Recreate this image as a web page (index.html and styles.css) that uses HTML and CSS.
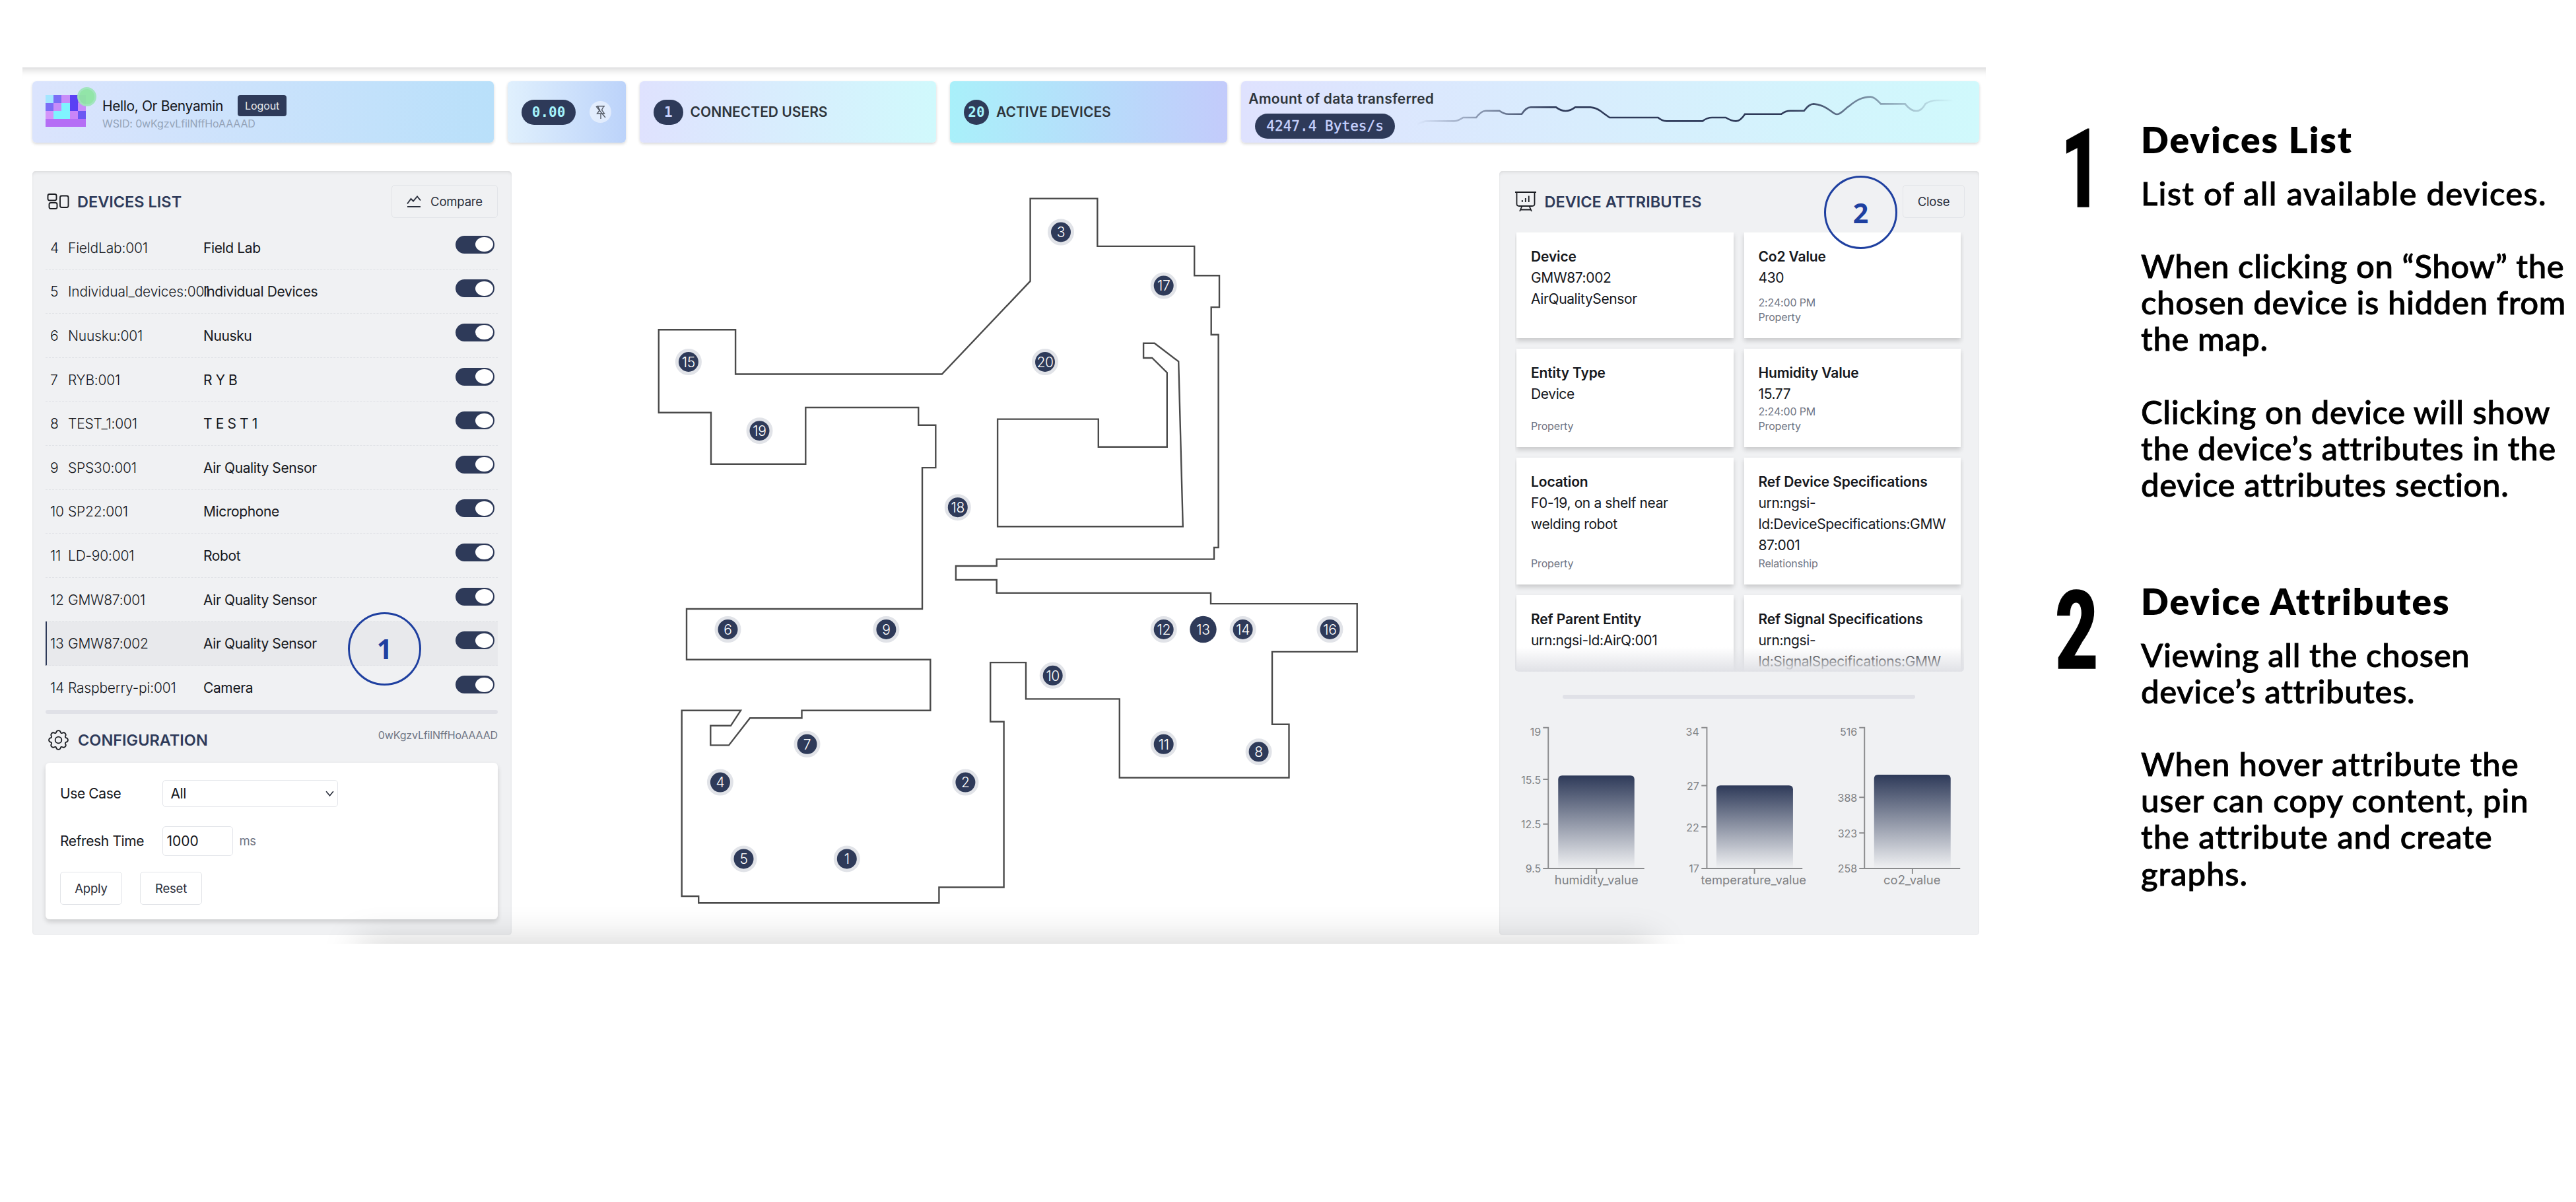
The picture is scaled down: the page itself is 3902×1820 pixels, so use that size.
FILE: index.html
```html
<!DOCTYPE html>
<html lang="en">
<head>
<meta charset="utf-8">
<title>Dashboard guide</title>
<link rel="stylesheet" href="styles.css">
</head>
<body>
<div class="page">
<div class="app">
  <header class="topbar">
    <section class="tile tile-user">
      <div class="avatar">
        <svg viewBox="0 0 5 4" preserveAspectRatio="none" shape-rendering="crispEdges">
          <rect width="5" height="4" fill="#b56ef5"/>
          <path fill="#a4e6ff" d="M0 0h1v1H0z"/>
          <path fill="#7b6df6" d="M1 0h1v1H1zM0 1h1v1H0z"/>
          <path fill="#c88df9" d="M2 0h1v1H2zM1 1h1v1H1zM4 1h1v1H4z"/>
          <path fill="#5a40f4" d="M3 0h1v2H3z"/>
          <path fill="#7ff4ff" d="M2 1h1v1H2zM1 2h2v1H1z"/>
          <path fill="#d494fa" d="M0 2h1v1H0z"/><path fill="#c985f8" d="M3 2h1v1H3z"/>
          <path fill="#6b57f3" d="M4 2h1v1H4z"/>
        </svg>
        <i class="online"></i>
      </div>
      <div class="user">
        <div class="hello"><span>Hello, Or Benyamin</span><button class="logout">Logout</button></div>
        <div class="wsid">WSID: 0wKgzvLfilNffHoAAAAD</div>
      </div>
    </section>
    <section class="tile tile-pin">
      <span class="pill cyan">0.00</span>
      <span class="pin"><svg viewBox="0 0 16 20"><path d="M2 .8h12M3.500 1l3 5.500-4 5.500h11l-4-5.500 3-5.500M8 12v8M1 1l14 17"/></svg></span>
    </section>
    <section class="tile tile-users"><span class="pill lilac">1</span><b>CONNECTED USERS</b></section>
    <section class="tile tile-active"><span class="pill round cyan">20</span><b>ACTIVE DEVICES</b></section>
    <section class="tile tile-data">
      <div><b class="amount">Amount of data transferred</b><span class="pill lilac">4247.4 Bytes/s</span></div>
      <svg class="spark" viewBox="397 190 1065 140" preserveAspectRatio="none">
        <defs><linearGradient id="fade" gradientUnits="userSpaceOnUse" x1="397" y1="0" x2="1462" y2="0"><stop offset="0" stop-color="#2e3a59" stop-opacity="0"/><stop offset=".25" stop-color="#2e3a59"/><stop offset=".7" stop-color="#2e3a59"/><stop offset="1" stop-color="#2e3a59" stop-opacity="0"/></linearGradient></defs>
        <path d="M397 325Q410 308 420 308H472Q480 308 490 292H516Q526 261 535 261H562Q571 276 580 276H606Q615 245 624 245H674Q684 262 693 262T712 245H742Q754 248 762 262T780 292H876Q884 308 893 308H964Q973 292 983 292H1010Q1021 308 1030 308T1048 276H1120Q1128 261 1138 261H1165Q1175 230 1184 230C1200 232 1210 248 1218 262Q1226 277 1230 277C1238 277 1244 255 1254 240C1268 214 1280 198 1297 198Q1304 198 1317 230H1365Q1376 262 1387 262T1405 230Q1415 214 1428 214H1462"/>
      </svg>
    </section>
  </header>

  <main class="main">
    <aside class="panel devices">
      <div class="head">
        <h2><svg class="ic" viewBox="0 0 34 26"><rect x="1.500" y="2" width="13" height="9.500" rx="2.500"/><rect x="3.500" y="15" width="12" height="9" rx="2.500"/><rect x="20" y="4.500" width="12.500" height="17.500" rx="2.500"/></svg>DEVICES LIST</h2>
        <button class="btn compare"><svg viewBox="0 0 22 18"><path d="M1 12.500L6.500 5l3.500 3.500 6-7 5 6M1 17h20"/></svg>Compare</button>
      </div>
      <ul class="rows">
        <li><span>4</span><span>FieldLab:001</span><em>Field Lab</em><i class="toggle"></i></li>
        <li><span>5</span><span>Individual_devices:001</span><em>Individual Devices</em><i class="toggle"></i></li>
        <li><span>6</span><span>Nuusku:001</span><em>Nuusku</em><i class="toggle"></i></li>
        <li><span>7</span><span>RYB:001</span><em>R Y B</em><i class="toggle"></i></li>
        <li><span>8</span><span>TEST_1:001</span><em>T E S T 1</em><i class="toggle"></i></li>
        <li><span>9</span><span>SPS30:001</span><em>Air Quality Sensor</em><i class="toggle"></i></li>
        <li><span>10</span><span>SP22:001</span><em>Microphone</em><i class="toggle"></i></li>
        <li><span>11</span><span>LD-90:001</span><em>Robot</em><i class="toggle"></i></li>
        <li><span>12</span><span>GMW87:001</span><em>Air Quality Sensor</em><i class="toggle"></i></li>
        <li class="on"><span>13</span><span>GMW87:002</span><em>Air Quality Sensor</em><i class="toggle"></i></li>
        <li><span>14</span><span>Raspberry-pi:001</span><em>Camera</em><i class="toggle"></i></li>
      </ul>
      <div class="rule"></div>
      <div class="conf-head">
        <h2><svg class="ic gear" viewBox="-.6 -.6 17.200 17.200"><circle cx="8" cy="8" r="2.700"/><path d="M9.796 1.343c-.527-1.790-3.065-1.790-3.592 0l-.094.319a.873.873 0 0 1-1.255.52l-.292-.16c-1.640-.892-3.433.902-2.540 2.541l.159.292a.873.873 0 0 1-.52 1.255l-.319.094c-1.790.527-1.790 3.065 0 3.592l.319.094a.873.873 0 0 1 .52 1.255l-.16.292c-.892 1.640.901 3.434 2.541 2.540l.292-.159a.873.873 0 0 1 1.255.52l.094.319c.527 1.790 3.065 1.790 3.592 0l.094-.319a.873.873 0 0 1 1.255-.52l.292.16c1.640.893 3.434-.902 2.540-2.541l-.159-.292a.873.873 0 0 1 .52-1.255l.319-.094c1.790-.527 1.790-3.065 0-3.592l-.319-.094a.873.873 0 0 1-.52-1.255l.16-.292c.893-1.640-.902-3.433-2.541-2.540l-.292.159a.873.873 0 0 1-1.255-.52z"/></svg>CONFIGURATION</h2>
        <small>0wKgzvLfilNffHoAAAAD</small>
      </div>
      <div class="config">
        <div class="field"><label>Use Case</label><div class="select">All<svg viewBox="0 0 12 8"><path d="M1 1l5 6 5-6"/></svg></div></div>
        <div class="field refresh"><label>Refresh Time</label><div class="input">1000</div><span class="ms">ms</span></div>
        <div class="actions"><button class="btn">Apply</button><button class="btn">Reset</button></div>
      </div>
    </aside>

    <svg class="map" viewBox="775 259 1496 1157">
      <g class="walls">
        <path d="M1560.600 300.600H1662.300V372.900H1809.200V417.300H1847V465.100H1834.700V506.800H1845.600V829H1839V846.600H1509.700V857H1447.900V878H1509.700V897.900H1834V914.100H2055.700V986.900H1927V1096.800H1952.500V1177.500H1695.800V1058.400H1554V1003.100H1500.200V1092.800H1520.600V1343.500H1422.400V1367.300H1058.200V1357H1032.700V1075.800H1122L1106.900 1098.800H1076.300V1128.400H1104L1136 1087.300H1214.500V1075.800H1409.300V998.700H1040V922H1397V708.100H1417.300V643.800H1391.200V617H1220.300V702.700H1077V624.700H997.800V499.200H1114.100V566.500H1426.800L1560.600 425.700Z"/>
        <path d="M1732.100 519.800H1748.900L1785.200 547.400L1791.800 797.300H1511.100V634.600H1663.800V676.700H1767.800V564.200L1745.200 542H1732.100Z"/>
      </g>
      <g class="marks">
        <g transform="translate(1607 351.500)"><circle r="17.500"/><text>3</text></g>
        <g transform="translate(1762.700 432.600)"><circle r="17.500"/><text>17</text></g>
        <g transform="translate(1042.900 548)"><circle r="17.500"/><text>15</text></g>
        <g transform="translate(1583 548)"><circle r="17.500"/><text>20</text></g>
        <g transform="translate(1150.500 652.200)"><circle r="17.500"/><text>19</text></g>
        <g transform="translate(1450.800 768.200)"><circle r="17.500"/><text>18</text></g>
        <g transform="translate(1102.500 953)"><circle r="17.500"/><text>6</text></g>
        <g transform="translate(1342.400 953)"><circle r="17.500"/><text>9</text></g>
        <g transform="translate(1762.700 953)"><circle r="17.500"/><text>12</text></g>
        <g transform="translate(1822.500 953)" class="sel"><circle r="20.200"/><text>13</text></g>
        <g transform="translate(1882.600 953)"><circle r="17.500"/><text>14</text></g>
        <g transform="translate(2014.500 953)"><circle r="17.500"/><text>16</text></g>
        <g transform="translate(1594.700 1022.800)"><circle r="17.500"/><text>10</text></g>
        <g transform="translate(1222.500 1126.800)"><circle r="17.500"/><text>7</text></g>
        <g transform="translate(1762.700 1126.800)"><circle r="17.500"/><text>11</text></g>
        <g transform="translate(1906.600 1138.300)"><circle r="17.500"/><text>8</text></g>
        <g transform="translate(1090.900 1184.600)"><circle r="17.500"/><text>4</text></g>
        <g transform="translate(1462.400 1184.600)"><circle r="17.500"/><text>2</text></g>
        <g transform="translate(1126.500 1300.400)"><circle r="17.500"/><text>5</text></g>
        <g transform="translate(1282.800 1300.400)"><circle r="17.500"/><text>1</text></g>
      </g>
    </svg>

    <aside class="panel attrs">
      <div class="head">
        <h2><svg class="ic board" viewBox="0 0 32 32"><path d="M0 2h32M2.500 2v17.500q0 3.500 3.500 3.500h20q3.500 0 3.500-3.500V2M10.500 23l-3.500 8M21.500 23l3.500 8M8.500 28.500h15M10.800 17v-3M15.800 17v-6M20.800 17V7.500"/></svg>DEVICE ATTRIBUTES</h2>
        <button class="btn">Close</button>
      </div>
      <div class="cards">
        <article><h3>Device</h3><p>GMW87:002<br>AirQualitySensor</p></article>
        <article><h3>Co2 Value</h3><p>430</p><small>2:24:00 PM<br>Property</small></article>
        <article><h3>Entity Type</h3><p>Device</p><small>Property</small></article>
        <article><h3>Humidity Value</h3><p>15.77</p><small>2:24:00 PM<br>Property</small></article>
        <article><h3>Location</h3><p>F0-19, on a shelf near welding robot</p><small>Property</small></article>
        <article><h3>Ref Device Specifications</h3><p>urn:ngsi-<br>ld:DeviceSpecifications:GMW<br>87:001</p><small>Relationship</small></article>
        <article><h3>Ref Parent Entity</h3><p>urn:ngsi-ld:AirQ:001</p></article>
        <article><h3>Ref Signal Specifications</h3><p>urn:ngsi-<br>ld:SignalSpecifications:GMW</p></article>
      </div>
      <div class="rule short"></div>
      <svg class="charts" viewBox="2271 1090 727 260">
        <defs><linearGradient id="bar" x1="0" y1="0" x2="0" y2="1"><stop offset="0" stop-color="#2e3a59"/><stop offset="1" stop-color="#2e3a59" stop-opacity="0"/></linearGradient></defs>
        <g fill="url(#bar)">
          <path d="M2360 1315V1180.300q0-6 6-6H2469.500q6 0 6 6V1315z"/>
          <path d="M2599.700 1315V1195.300q0-6 6-6H2709.700q6 0 6 6V1315z"/>
          <path d="M2838.500 1315V1179q0-6 6-6H2948.500q6 0 6 6V1315z"/>
        </g>
        <path class="axis" d="M2337 1101.700H2345V1315M2337 1180H2345M2337 1247.700H2345M2337 1315H2490.500M2418 1315v8M2577 1101.700H2585.200V1315M2577 1189.500H2585M2577 1252H2585M2577 1315H2730M2657.400 1315v8M2816 1101.700H2824V1315M2816 1207.300H2824M2816 1261.300H2824M2816 1315H2969M2896.600 1315v8"/>
        <g class="ylab">
          <text x="2334" y="1113.500">19</text><text x="2334" y="1186.500">15.5</text><text x="2334" y="1253.500">12.5</text><text x="2334" y="1321">9.5</text>
          <text x="2573.500" y="1113.500">34</text><text x="2573.500" y="1195.500">27</text><text x="2573.500" y="1258.500">22</text><text x="2573.500" y="1321">17</text>
          <text x="2813" y="1113.500">516</text><text x="2813" y="1213.500">388</text><text x="2813" y="1267.500">323</text><text x="2813" y="1321">258</text>
        </g>
        <g class="xlab"><text x="2418" y="1339">humidity_value</text><text x="2656" y="1339">temperature_value</text><text x="2896" y="1339">co2_value</text></g>
      </svg>
    </aside>
  </main>
  <div class="glow"></div>
  <span class="callout c1">1</span>
  <span class="callout c2">2</span>
</div>

<div class="notes">
  <section class="note n1">
    <div class="num"><span>1</span></div>
    <div class="body">
      <h1>Devices List</h1>
      <p class="loose">List of all available devices.</p>
      <p>When clicking on “Show” the<br>chosen device is hidden from<br>the map.</p>
      <p>Clicking on device will show<br>the device’s attributes in the<br>device attributes section.</p>
    </div>
  </section>
  <section class="note n2">
    <div class="num"><span>2</span></div>
    <div class="body">
      <h1>Device Attributes</h1>
      <p>Viewing all the chosen<br>device’s attributes.</p>
      <p class="mid">When hover attribute the<br>user can copy content, pin<br>the attribute and create<br>graphs.</p>
    </div>
  </section>
</div>
</div>
</body>
</html>
```
FILE: styles.css
```css
*{box-sizing:border-box;margin:0;padding:0}
body{background:#fff;font-family:Inter,"Liberation Sans",sans-serif;font-size:21px;letter-spacing:-.38px;color:#16181d;overflow:hidden}
button{font:inherit;letter-spacing:inherit;color:inherit;background:none;border:0}
ul{list-style:none}
svg{display:block;fill:none}
i,em{font-style:normal}
.page{display:flex;width:3902px;height:1820px;padding:102px 0 0 34px}

.app{position:relative;flex:none;width:2974px;height:1326.500px;padding:19px 10px 0 15px;overflow:hidden;box-shadow:inset 0 12px 10px -8px rgba(0,0,0,.12);border-top:2px solid #e3e3e4}
.topbar{display:grid;grid-template-columns:698.500px 179px 449px 420px 1fr;grid-template-rows:93px;gap:21.200px;height:93px}
.tile{display:flex;align-items:center;border-radius:6px;box-shadow:0 2px 4px rgba(0,0,0,.16);white-space:nowrap}
.tile b{font-weight:600;letter-spacing:0;color:#2f353b}
.tile-user{align-items:flex-start;padding:21px 0 0 20px;gap:25px;background:linear-gradient(90deg,#dbe4fd,#b9e0fa)}
.avatar{position:relative;width:61px;height:48px}
.avatar svg{width:100%;height:100%}
.online{position:absolute;left:48px;top:-12px;width:29px;height:29px;border-radius:50%;background:#8fe6a4;border:3px solid #9fe6bb;opacity:.95}
.hello{display:flex;align-items:center;height:32px}
.logout{width:74px;height:32px;margin-left:22px;border-radius:4px;background:#2e3a59;color:#e8eaef;font-size:16px;letter-spacing:-.1px}
.wsid{font-size:16px;line-height:22px;letter-spacing:-.14px;color:#94a3b8}
.tile-pin{padding-left:21px;gap:21px;background:linear-gradient(90deg,#e0f0fd,#bcd3fa)}
.pin{display:grid;place-items:center;width:33px;height:33px;border-radius:50%;background:rgba(255,255,255,.5)}
.pin svg{width:16px;height:20px;stroke:#555b66;stroke-width:1.400}
.pill{display:inline-flex;align-items:center;height:38px;padding:0 16px;border-radius:19px;background:#2e3a59;font:700 21px "DejaVu Sans Mono",monospace;letter-spacing:.05px;white-space:pre}
.cyan{color:#a5f3fc}
.lilac{color:#c7d2fe}
.round{width:38px;padding:0;justify-content:center}
.tile-users{padding-left:21px;gap:11px;background:linear-gradient(90deg,#dfe2fe,#d0f9fc)}
.tile-active{padding-left:21px;gap:11px;background:linear-gradient(90deg,#a9f0fa,#c3cbfb)}
.tile-data{align-items:flex-start;padding:14px 38px 0 11px;justify-content:space-between;background:linear-gradient(90deg,#dfe2fe,#d0f9fc)}
.tile-data > div{flex:none;width:240px}
.tile-data b{display:block;line-height:25px;letter-spacing:.2px}
.tile-data .pill{margin:10px 0 0 10px;padding:0 17px;font-weight:400;-webkit-text-stroke:.4px}
.spark{flex:none;width:815px;height:46.700px;margin-top:6.500px;overflow:visible}
.spark path{stroke:url(#fade);stroke-width:2.600;vector-effect:non-scaling-stroke}

.main{display:grid;grid-template-columns:725.500px 1fr 727.500px;margin-top:43px;height:1157px}
.panel{background:#f0f1f3;border-radius:5px;box-shadow:inset 0 4px 5px -2px rgba(0,0,0,.08),inset 0 0 3px rgba(0,0,0,.05)}
.devices{padding:21px 20.500px 0 20px}
.head{display:flex;justify-content:space-between;height:50px}
h2{display:flex;align-items:center;gap:12px;font-size:23.500px;font-weight:600;letter-spacing:0;color:#2e3a59}
.ic{width:34px;height:26px;margin-left:2px;stroke:#1b1d22;stroke-width:1.900}
.ic.gear{width:31px;height:31px;margin-left:4px;margin-right:2px;stroke-width:1}
.ic.board{width:32px;height:32px;margin:0 1px 0 -1px;stroke-width:1.800}
.btn{display:flex;align-items:center;justify-content:center;height:50px;width:94px;border:1.500px solid #e2e4e8;border-radius:5px;font-size:18.500px;letter-spacing:-.2px;color:#2a2f3c}
.compare{width:161px;gap:14px}
.compare svg{width:22px;height:18px;stroke:#2a2f3c;stroke-width:1.900}
.rows{margin-top:12px}
.rows li{display:grid;grid-template-columns:27px 205px 1fr 59px;align-items:center;height:66.600px;padding:1px 5px 0 7px;border-bottom:1.500px dashed #e0e2e6;white-space:nowrap}
.rows li:last-child{border:0}
.rows span{font-weight:300;letter-spacing:-.2px}
.rows .on{background:#e8e9ec;border-left:2.500px solid #2e3a59;padding-left:5px}
.toggle{height:27px;margin-bottom:10px;border-radius:14px;background:#2e3a59;padding:2.500px;display:flex;justify-content:flex-end}
.toggle::after{content:"";width:27px;height:22px;border-radius:50%;background:#fff}
.rule{height:6px;border-radius:3px;background:#e0e1e7}
.conf-head{display:flex;justify-content:space-between;align-items:center;height:74px;padding-top:6px}
.conf-head small{font-size:16px;letter-spacing:-.16px;color:#6f7584;margin-bottom:15px}
.config{height:237px;padding:26px 22px;border-radius:6px;background:#fff;box-shadow:0 4px 7px rgba(0,0,0,.15)}
.field{display:flex;align-items:center}
.field label{width:154.500px}
.select{display:flex;align-items:center;justify-content:space-between;width:266.500px;height:41px;padding:0 5px 0 12px;border:1.500px solid #e3e5ea;border-radius:5px}
.select svg{width:13px;height:9px;stroke:#2a2f3c;stroke-width:1.500}
.refresh{margin-top:29px}
.input{display:flex;align-items:center;width:107px;height:45px;padding-left:6px;border:1.500px solid #e3e5ea;border-radius:5px;letter-spacing:0}
.ms{margin-left:10px;font-size:18.500px;color:#6f7584}
.actions{display:flex;gap:27px;margin-top:24px}

.map{width:100%;height:100%}
.walls{stroke:#4a4a4a;stroke-width:2.400}
.marks circle{fill:#2e3a59;stroke:#e1e3e8;stroke-width:5}
.marks .sel circle{stroke:none}
.marks text{fill:#fff;font-size:21px;font-weight:300;text-anchor:middle;transform:translateY(7.700px);letter-spacing:-.3px}

.attrs{padding-top:21px}
.attrs .head{padding:0 22px 0 25px}
.cards{position:relative;display:grid;grid-template-columns:328.500px 328.700px;grid-template-rows:160px 149.300px 192px 160px;gap:16px;height:665px;margin:22px 23px 0 24px;padding:0 2.500px;overflow:hidden;border-radius:0 0 5px 5px}
.cards::after{content:"";position:absolute;left:0;right:0;bottom:0;height:37px;background:linear-gradient(rgba(224,225,230,0),#e0e1e6)}
.cards article{display:flex;flex-direction:column;padding:21px 20px 21px 22px;background:#fff;box-shadow:0 4px 7px rgba(0,0,0,.17);line-height:32px}
.cards h3{font-size:21px;font-weight:600;letter-spacing:-.14px}
.cards small{margin-top:auto;font-size:16px;line-height:21.500px;letter-spacing:-.16px;color:#6f7584}
.short{width:534px;margin:35px 0 0 96px}
.charts{width:100%;height:260px;margin-top:32px}
.axis{stroke:#8a8b8d;stroke-width:1.900}
.charts text{fill:#7f8184;letter-spacing:0}
.ylab{font-size:16px;text-anchor:end}
.xlab{font-size:18.400px;text-anchor:middle}

.glow{position:absolute;left:510px;width:1960px;top:1325px;height:40px;box-shadow:0 0 56px rgba(0,0,0,.22)}
.callout{position:absolute;display:grid;place-items:center;width:111px;height:111px;border:3.500px solid #1f40a0;border-radius:50%;color:#1f40a0;font:700 41px "Open Sans",sans-serif;letter-spacing:0}
.c1{left:493px;top:822.500px}
.c2{left:2729px;top:162px}

.notes{flex:none;margin-left:106px;font-family:Lato,"Open Sans",sans-serif;color:#000;white-space:nowrap}
.note{display:flex}
.num{width:129px;padding-top:75px}
.num span{display:inline-block;font:700 166px/160px "Roboto Condensed",Roboto,sans-serif;letter-spacing:0;transform:translateX(3px) scaleX(.74);transform-origin:0 50%;-webkit-text-stroke:1.500px #000}
.note h1{font-size:55px;line-height:80px;font-weight:800;letter-spacing:2px;margin-bottom:14px}
.note p{font-size:49px;line-height:55.100px;font-weight:500;letter-spacing:.65px;margin-bottom:55.100px;-webkit-text-stroke:.9px #000}
.note .loose{letter-spacing:1.300px}
.note .mid{letter-spacing:.95px}
.n1 .body{padding-top:69px}
.n1 .num span{transform:translateX(7px) scaleX(.74)}
.n2 .body{padding-top:54px}
.n2 .num{padding-top:60px}
.n2 .num span{transform:translateX(-2px) scaleX(.8)}
```
